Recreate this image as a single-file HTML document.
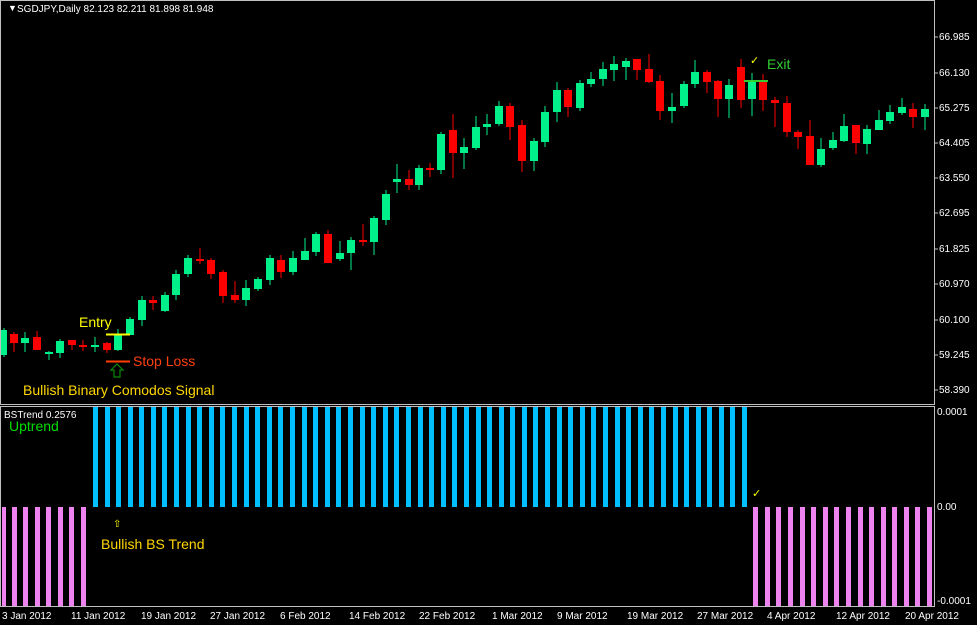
<!DOCTYPE html>
<html><head><meta charset="utf-8"><style>
html,body{margin:0;padding:0;background:#000;}
svg{display:block;font-family:"Liberation Sans",sans-serif;}
</style></head><body>
<svg width="977" height="625" viewBox="0 0 977 625" xmlns="http://www.w3.org/2000/svg">
<rect width="977" height="625" fill="#000"/>
<g stroke="#c0c0c0" stroke-width="1" fill="none">
<rect x="0.5" y="0.5" width="934" height="404"/>
<rect x="0.5" y="406.5" width="934" height="200"/>
</g>
<g font-size="10" fill="#fff">
<text x="8" y="11" font-size="9">▼</text>
<text x="17" y="12">SGDJPY,Daily  82.123 82.211 81.898 81.948</text>
<text x="4" y="418">BSTrend 0.2576</text>
</g>
<g font-size="10" fill="#fff">
<text x="939" y="40">66.985</text>
<text x="939" y="76">66.130</text>
<text x="939" y="111">65.275</text>
<text x="939" y="146">64.405</text>
<text x="939" y="181">63.550</text>
<text x="939" y="216">62.695</text>
<text x="939" y="252">61.825</text>
<text x="939" y="287">60.970</text>
<text x="939" y="323">60.100</text>
<text x="939" y="358">59.245</text>
<text x="939" y="393">58.390</text>
<text x="937" y="415">0.0001</text>
<text x="937" y="510">0.00</text>
<text x="937" y="604">-0.0001</text>
</g>
<g stroke="#c0c0c0">
<line x1="935" y1="37" x2="938" y2="37"/><line x1="935" y1="73" x2="938" y2="73"/><line x1="935" y1="108" x2="938" y2="108"/><line x1="935" y1="143" x2="938" y2="143"/><line x1="935" y1="178" x2="938" y2="178"/><line x1="935" y1="213" x2="938" y2="213"/><line x1="935" y1="249" x2="938" y2="249"/><line x1="935" y1="284" x2="938" y2="284"/><line x1="935" y1="320" x2="938" y2="320"/><line x1="935" y1="355" x2="938" y2="355"/><line x1="935" y1="390" x2="938" y2="390"/>
</g>
<g font-size="10" fill="#fff">
<text x="2" y="619">3 Jan 2012</text>
<text x="71" y="619">11 Jan 2012</text>
<text x="141" y="619">19 Jan 2012</text>
<text x="210" y="619">27 Jan 2012</text>
<text x="280" y="619">6 Feb 2012</text>
<text x="349" y="619">14 Feb 2012</text>
<text x="419" y="619">22 Feb 2012</text>
<text x="492" y="619">1 Mar 2012</text>
<text x="557" y="619">9 Mar 2012</text>
<text x="627" y="619">19 Mar 2012</text>
<text x="697" y="619">27 Mar 2012</text>
<text x="767" y="619">4 Apr 2012</text>
<text x="836" y="619">12 Apr 2012</text>
<text x="905" y="619">20 Apr 2012</text>
</g>
<g stroke-width="1">
<g stroke="#00f08a">
<line x1="4" y1="328" x2="4" y2="357"/><line x1="25" y1="332" x2="25" y2="352"/><line x1="49" y1="351" x2="49" y2="360"/><line x1="60" y1="339" x2="60" y2="358"/><line x1="95" y1="337" x2="95" y2="352"/><line x1="118" y1="329" x2="118" y2="351"/><line x1="130" y1="317" x2="130" y2="335"/><line x1="142" y1="296" x2="142" y2="326"/><line x1="165" y1="292" x2="165" y2="312"/><line x1="176" y1="270" x2="176" y2="300"/><line x1="188" y1="255" x2="188" y2="277"/><line x1="246" y1="280" x2="246" y2="306"/><line x1="258" y1="277" x2="258" y2="291"/><line x1="270" y1="255" x2="270" y2="285"/><line x1="293" y1="251" x2="293" y2="275"/><line x1="305" y1="238" x2="305" y2="260"/><line x1="316" y1="232" x2="316" y2="256"/><line x1="340" y1="241" x2="340" y2="261"/><line x1="351" y1="237" x2="351" y2="270"/><line x1="374" y1="216" x2="374" y2="255"/><line x1="386" y1="190" x2="386" y2="225"/><line x1="397" y1="164" x2="397" y2="193"/><line x1="419" y1="165" x2="419" y2="190"/><line x1="441" y1="132" x2="441" y2="174"/><line x1="464" y1="138" x2="464" y2="169"/><line x1="476" y1="116" x2="476" y2="150"/><line x1="487" y1="114" x2="487" y2="135"/><line x1="499" y1="101" x2="499" y2="126"/><line x1="534" y1="138" x2="534" y2="171"/><line x1="545" y1="106" x2="545" y2="147"/><line x1="557" y1="82" x2="557" y2="122"/><line x1="580" y1="80" x2="580" y2="111"/><line x1="591" y1="72" x2="591" y2="87"/><line x1="603" y1="62" x2="603" y2="86"/><line x1="614" y1="56" x2="614" y2="81"/><line x1="626" y1="58" x2="626" y2="80"/><line x1="672" y1="93" x2="672" y2="123"/><line x1="684" y1="81" x2="684" y2="108"/><line x1="695" y1="60" x2="695" y2="88"/><line x1="729" y1="79" x2="729" y2="118"/><line x1="752" y1="73" x2="752" y2="116"/><line x1="821" y1="138" x2="821" y2="167"/><line x1="833" y1="132" x2="833" y2="150"/><line x1="844" y1="114" x2="844" y2="142"/><line x1="867" y1="125" x2="867" y2="154"/><line x1="879" y1="110" x2="879" y2="130"/><line x1="890" y1="105" x2="890" y2="124"/><line x1="902" y1="98" x2="902" y2="115"/><line x1="925" y1="104" x2="925" y2="130"/>
</g>
<g stroke="#ff0000">
<line x1="14" y1="332" x2="14" y2="352"/><line x1="37" y1="331" x2="37" y2="350"/><line x1="72" y1="340" x2="72" y2="350"/><line x1="83" y1="340" x2="83" y2="351"/><line x1="107" y1="342" x2="107" y2="353"/><line x1="153" y1="296" x2="153" y2="310"/><line x1="200" y1="248" x2="200" y2="264"/><line x1="211" y1="258" x2="211" y2="279"/><line x1="223" y1="270" x2="223" y2="303"/><line x1="235" y1="281" x2="235" y2="303"/><line x1="281" y1="255" x2="281" y2="278"/><line x1="328" y1="230" x2="328" y2="263"/><line x1="363" y1="224" x2="363" y2="246"/><line x1="409" y1="170" x2="409" y2="190"/><line x1="430" y1="163" x2="430" y2="177"/><line x1="453" y1="114" x2="453" y2="178"/><line x1="510" y1="103" x2="510" y2="140"/><line x1="522" y1="120" x2="522" y2="172"/><line x1="568" y1="88" x2="568" y2="117"/><line x1="637" y1="59" x2="637" y2="80"/><line x1="649" y1="54" x2="649" y2="83"/><line x1="660" y1="75" x2="660" y2="120"/><line x1="707" y1="70" x2="707" y2="93"/><line x1="718" y1="80" x2="718" y2="117"/><line x1="741" y1="59" x2="741" y2="108"/><line x1="763" y1="74" x2="763" y2="111"/><line x1="775" y1="97" x2="775" y2="127"/><line x1="787" y1="96" x2="787" y2="137"/><line x1="798" y1="130" x2="798" y2="149"/><line x1="810" y1="120" x2="810" y2="165"/><line x1="856" y1="125" x2="856" y2="154"/><line x1="913" y1="103" x2="913" y2="128"/>
</g>
</g>
<g fill="#00f08a">
<rect x="1" y="330" width="6" height="25"/><rect x="21" y="338" width="8" height="5"/><rect x="45" y="352" width="8" height="2"/><rect x="56" y="341" width="8" height="12"/><rect x="91" y="345" width="8" height="2"/><rect x="114" y="335" width="8" height="15"/><rect x="126" y="319" width="8" height="16"/><rect x="138" y="300" width="8" height="20"/><rect x="161" y="295" width="8" height="16"/><rect x="172" y="274" width="8" height="21"/><rect x="184" y="258" width="8" height="16"/><rect x="242" y="288" width="8" height="12"/><rect x="254" y="279" width="8" height="10"/><rect x="266" y="258" width="8" height="22"/><rect x="289" y="258" width="8" height="14"/><rect x="301" y="251" width="8" height="9"/><rect x="312" y="234" width="8" height="18"/><rect x="336" y="253" width="8" height="6"/><rect x="347" y="240" width="8" height="13"/><rect x="370" y="218" width="8" height="24"/><rect x="382" y="194" width="8" height="26"/><rect x="393" y="179" width="8" height="3"/><rect x="415" y="168" width="8" height="17"/><rect x="437" y="134" width="8" height="36"/><rect x="460" y="147" width="8" height="6"/><rect x="472" y="127" width="8" height="21"/><rect x="483" y="124" width="8" height="3"/><rect x="495" y="106" width="8" height="18"/><rect x="530" y="141" width="8" height="20"/><rect x="541" y="112" width="8" height="30"/><rect x="553" y="90" width="8" height="22"/><rect x="576" y="83" width="8" height="25"/><rect x="587" y="79" width="8" height="5"/><rect x="599" y="69" width="8" height="10"/><rect x="610" y="64" width="8" height="6"/><rect x="622" y="61" width="8" height="6"/><rect x="668" y="107" width="8" height="4"/><rect x="680" y="84" width="8" height="22"/><rect x="691" y="72" width="8" height="12"/><rect x="725" y="85" width="8" height="14"/><rect x="748" y="81" width="8" height="18"/><rect x="817" y="149" width="8" height="16"/><rect x="829" y="140" width="8" height="8"/><rect x="840" y="126" width="8" height="15"/><rect x="863" y="129" width="8" height="15"/><rect x="875" y="120" width="8" height="10"/><rect x="886" y="112" width="8" height="9"/><rect x="898" y="107" width="8" height="6"/><rect x="921" y="109" width="8" height="8"/>
</g>
<g fill="#ff0000">
<rect x="10" y="334" width="8" height="9"/><rect x="33" y="337" width="8" height="13"/><rect x="68" y="340" width="8" height="5"/><rect x="79" y="345" width="8" height="2"/><rect x="103" y="343" width="8" height="7"/><rect x="149" y="300" width="8" height="3"/><rect x="196" y="259" width="8" height="2"/><rect x="207" y="260" width="8" height="14"/><rect x="219" y="272" width="8" height="24"/><rect x="231" y="295" width="8" height="5"/><rect x="277" y="260" width="8" height="12"/><rect x="324" y="234" width="8" height="29"/><rect x="359" y="240" width="8" height="2"/><rect x="405" y="179" width="8" height="6"/><rect x="426" y="168" width="8" height="2"/><rect x="449" y="130" width="8" height="23"/><rect x="506" y="106" width="8" height="21"/><rect x="518" y="125" width="8" height="36"/><rect x="564" y="90" width="8" height="17"/><rect x="633" y="59" width="8" height="11"/><rect x="645" y="69" width="8" height="13"/><rect x="656" y="81" width="8" height="30"/><rect x="703" y="72" width="8" height="10"/><rect x="714" y="81" width="8" height="18"/><rect x="737" y="67" width="8" height="33"/><rect x="759" y="80" width="8" height="20"/><rect x="771" y="100" width="8" height="3"/><rect x="783" y="103" width="8" height="29"/><rect x="794" y="132" width="8" height="5"/><rect x="806" y="136" width="8" height="29"/><rect x="852" y="125" width="8" height="18"/><rect x="909" y="109" width="8" height="8"/>
</g>
<line x1="106" y1="334.5" x2="130" y2="334.5" stroke="#ffff00" stroke-width="2"/>
<line x1="106" y1="361.5" x2="130" y2="361.5" stroke="#ff4000" stroke-width="2"/>
<path d="M117 364 L111 370 L114 370 L114 377 L120 377 L120 370 L123 370 Z" fill="none" stroke="#0a8a0a" stroke-width="1.2"/>
<text x="79" y="327" font-size="14" fill="#ffff00">Entry</text>
<text x="133" y="366" font-size="14" fill="#ff4010">Stop Loss</text>
<text x="23" y="395" font-size="14" fill="#ffd700">Bullish Binary Comodos Signal</text>
<text x="767" y="69" font-size="14" fill="#33cc33">Exit</text>
<text x="750" y="64" font-size="11" fill="#ffff00">✓</text>
<line x1="744" y1="81" x2="768" y2="81" stroke="#33cc33" stroke-width="2"/>
<text x="9" y="431" font-size="14" fill="#00e000">Uptrend</text>
<g fill="#00bfff">
<rect x="93" y="407" width="5" height="100"/><rect x="105" y="407" width="5" height="100"/><rect x="116" y="407" width="5" height="100"/><rect x="128" y="407" width="5" height="100"/><rect x="139" y="407" width="5" height="100"/><rect x="151" y="407" width="5" height="100"/><rect x="162" y="407" width="5" height="100"/><rect x="174" y="407" width="5" height="100"/><rect x="186" y="407" width="5" height="100"/><rect x="197" y="407" width="5" height="100"/><rect x="209" y="407" width="5" height="100"/><rect x="220" y="407" width="5" height="100"/><rect x="232" y="407" width="5" height="100"/><rect x="244" y="407" width="5" height="100"/><rect x="255" y="407" width="5" height="100"/><rect x="267" y="407" width="5" height="100"/><rect x="278" y="407" width="5" height="100"/><rect x="290" y="407" width="5" height="100"/><rect x="302" y="407" width="5" height="100"/><rect x="313" y="407" width="5" height="100"/><rect x="325" y="407" width="5" height="100"/><rect x="336" y="407" width="5" height="100"/><rect x="348" y="407" width="5" height="100"/><rect x="360" y="407" width="5" height="100"/><rect x="371" y="407" width="5" height="100"/><rect x="383" y="407" width="5" height="100"/><rect x="394" y="407" width="5" height="100"/><rect x="406" y="407" width="5" height="100"/><rect x="418" y="407" width="5" height="100"/><rect x="429" y="407" width="5" height="100"/><rect x="441" y="407" width="5" height="100"/><rect x="452" y="407" width="5" height="100"/><rect x="464" y="407" width="5" height="100"/><rect x="476" y="407" width="5" height="100"/><rect x="487" y="407" width="5" height="100"/><rect x="499" y="407" width="5" height="100"/><rect x="510" y="407" width="5" height="100"/><rect x="522" y="407" width="5" height="100"/><rect x="533" y="407" width="5" height="100"/><rect x="545" y="407" width="5" height="100"/><rect x="557" y="407" width="5" height="100"/><rect x="568" y="407" width="5" height="100"/><rect x="580" y="407" width="5" height="100"/><rect x="591" y="407" width="5" height="100"/><rect x="603" y="407" width="5" height="100"/><rect x="615" y="407" width="5" height="100"/><rect x="626" y="407" width="5" height="100"/><rect x="638" y="407" width="5" height="100"/><rect x="649" y="407" width="5" height="100"/><rect x="661" y="407" width="5" height="100"/><rect x="673" y="407" width="5" height="100"/><rect x="684" y="407" width="5" height="100"/><rect x="696" y="407" width="5" height="100"/><rect x="707" y="407" width="5" height="100"/><rect x="719" y="407" width="5" height="100"/><rect x="730" y="407" width="5" height="100"/><rect x="742" y="407" width="5" height="100"/>
</g>
<g fill="#ee82ee">
<rect x="2" y="507" width="4" height="99"/><rect x="12" y="507" width="5" height="99"/><rect x="23" y="507" width="5" height="99"/><rect x="35" y="507" width="5" height="99"/><rect x="46" y="507" width="5" height="99"/><rect x="58" y="507" width="5" height="99"/><rect x="69" y="507" width="5" height="99"/><rect x="81" y="507" width="5" height="99"/>
<rect x="753" y="507" width="5" height="99"/><rect x="765" y="507" width="5" height="99"/><rect x="776" y="507" width="5" height="99"/><rect x="788" y="507" width="5" height="99"/><rect x="800" y="507" width="5" height="99"/><rect x="811" y="507" width="5" height="99"/><rect x="823" y="507" width="5" height="99"/><rect x="834" y="507" width="5" height="99"/><rect x="846" y="507" width="5" height="99"/><rect x="858" y="507" width="5" height="99"/><rect x="869" y="507" width="5" height="99"/><rect x="881" y="507" width="5" height="99"/><rect x="892" y="507" width="5" height="99"/><rect x="904" y="507" width="5" height="99"/><rect x="915" y="507" width="5" height="99"/><rect x="927" y="507" width="5" height="99"/>
</g>
<text x="752" y="497" font-size="11" fill="#ffff00">✓</text>
<text x="113" y="527" font-size="10" fill="#ffff00">⇧</text>
<text x="101" y="549" font-size="14" fill="#ffd700">Bullish BS Trend</text>
</svg>
</body></html>
